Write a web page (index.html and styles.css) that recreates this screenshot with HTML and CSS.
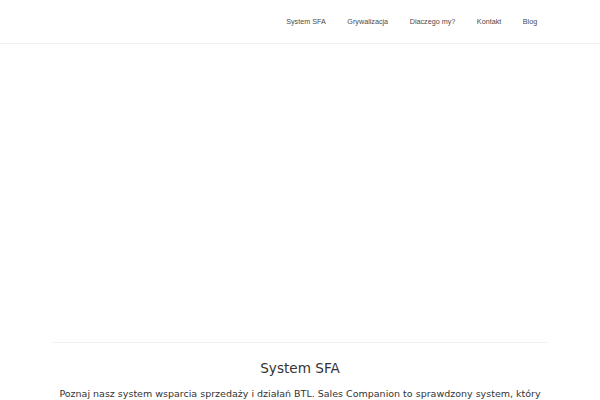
FILE: index.html
```html
<!DOCTYPE html>
<html lang="pl">
<head>
<meta charset="utf-8">
<link rel="stylesheet" href="styles.css">
</head>
<body>
<header class="topbar">
  <nav class="menu">
    <a class="menu-item" href="#">System SFA</a>
    <a class="menu-item" href="#">Grywalizacja</a>
    <a class="menu-item" href="#">Dlaczego my?</a>
    <a class="menu-item" href="#">Kontakt</a>
    <a class="menu-item" href="#">Blog</a>
  </nav>
</header>
<main class="content">
  <div class="hero"></div>
  <section class="intro">
    <h2 class="intro-title">System SFA</h2>
    <p class="intro-text">Poznaj nasz system wsparcia sprzedaży i działań BTL. Sales Companion to sprawdzony system, który pozwala na efektywne zarządzanie zespołem sprzedażowym.</p>
  </section>
</main>
</body>
</html>
```
FILE: styles.css
```css
html, body {
  margin: 0;
  padding: 0;
  background: #fff;
}
body {
  font-family: "DejaVu Sans", sans-serif;
  color: #333;
}
.topbar {
  height: 43px;
  border-bottom: 1px solid #f0f0f0;
  display: flex;
  justify-content: flex-end;
  align-items: center;
  padding-right: 52px;
}
.menu {
  display: flex;
  align-items: center;
}
.menu-item {
  font-family: "Liberation Sans", Arial, sans-serif;
  font-size: 7.2px;
  color: #4a4a4a;
  text-decoration: none;
  padding: 0 10.8px;
}
.content {
  width: 496px;
  margin: 0 auto;
}
.hero {
  height: 298px;
  border-bottom: 1px solid #f2f2f2;
}
.intro {
  text-align: center;
}
.intro-title {
  font-size: 13.6px;
  font-weight: normal;
  margin: 14px 0 0;
  line-height: 22px;
  color: #333;
}
.intro-text {
  font-size: 9.5px;
  line-height: 16px;
  margin: 7px 0 0;
  color: #333;
}
```
